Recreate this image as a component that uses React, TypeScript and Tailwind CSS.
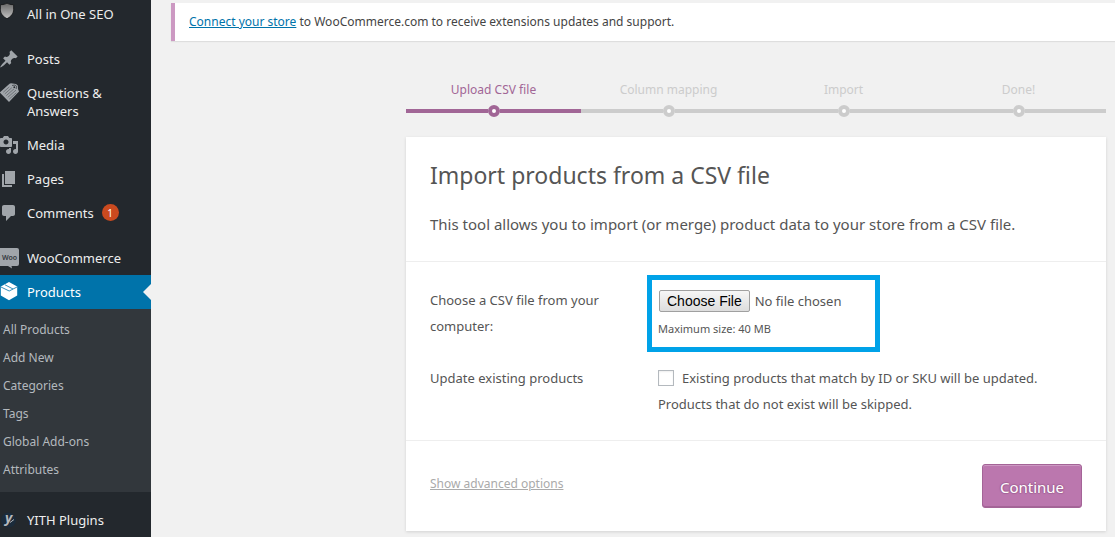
import type { ReactNode } from 'react'
import clsx from 'clsx'

const icons: Record<string, ReactNode> = {
  seo: (
    <>
      <defs>
        <linearGradient id="shield" x1="0" y1="0" x2="0" y2="1">
          <stop offset="0" stopColor="#666666" />
          <stop offset="1" stopColor="#c4c4c4" />
        </linearGradient>
      </defs>
      <path
        d="M8 -1l1.500.8c1.700.7 3.500.9 5.200.9v4.600c0 4.300-2.700 7.400-6.700 9.400C4 12.700 1.300 9.600 1.300 5.300V.7C3 .7 4.800.5 6.500-.2z"
        fill="url(#shield)"
        stroke="#1a1c1e"
      />
    </>
  ),
  posts: (
    <path d="M10.44 3.02l1.82-1.82 6.36 6.35-1.83 1.82c-1.05-.68-2.48-.57-3.41.36l-.75.75c-.92.93-1.04 2.35-.35 3.41l-1.83 1.82-2.41-2.41-2.8 2.79c-.42.42-3.38 2.71-3.8 2.29s1.86-3.39 2.28-3.81l2.79-2.79L4.1 9.36l1.83-1.82c1.05.69 2.48.57 3.4-.36l.75-.75c.93-.92 1.05-2.35.36-3.41z" />
  ),
  questions: (
    <>
      <path d="M.8 9.500L10.500.7l1.500-.5 5 .8 1.800 1.500.2 3.500 1 2.500L10 19z" />
      <path
        d="M4.300 9.200l6-5.300M5.800 10.900l7-6.200M7.300 12.600l8-7M8.800 14.300l8.200-7.200M10.300 16l7-6.200"
        stroke="#5a5f64"
        strokeWidth="0.7"
      />
      <path d="M13 2.500l3-.5 1.500 1.200-.3 2.800" fill="none" stroke="#3a3f44" strokeWidth="0.8" />
      <circle cx="15.300" cy="4.200" r="0.9" fill="#23282d" />
    </>
  ),
  media: (
    <path d="M13 11V4c0-.55-.45-1-1-1h-1.67L9 1H5L3.67 3H2c-.55 0-1 .45-1 1v7c0 .55.45 1 1 1h10c.55 0 1-.45 1-1zM7 4.500c1.380 0 2.500 1.120 2.500 2.500S8.380 9.500 7 9.500 4.500 8.380 4.500 7 5.620 4.500 7 4.500zM14 6h5v10.500c0 1.380-1.120 2.500-2.500 2.500S14 17.880 14 16.500s1.120-2.500 2.500-2.500c.17 0 .34.02.5.05V9h-3V6zm-4 8.050V13h2v3.500c0 1.380-1.120 2.500-2.500 2.500S7 17.880 7 16.500 8.120 14 9.500 14c.17 0 .34.02.5.05z" />
  ),
  pages: <path d="M6 15V2h10v13H6zm-1 1h8v2H3V5h2v11z" />,
  comments: (
    <path d="M5 2h9c1.100 0 2 .9 2 2v7c0 1.100-.9 2-2 2h-2l-5 5v-5H5c-1.100 0-2-.9-2-2V4c0-1.100.9-2 2-2z" />
  ),
  woo: (
    <>
      <path d="M1 0h17a2 2 0 0 1 2 2v14a2 2 0 0 1-2 2h-5.500l.5 2.500-4-2.500H1z" />
      <text x="3" y="11.500" fontSize="7" fontWeight="600" fill="#33383d">
        Woo
      </text>
    </>
  ),
  products: (
    <>
      <path d="M10 0l8.200 4.500v9L10 18.200l-8.200-4.700v-9z" />
      <path d="M2 5l8.200 4L18 5M6 2.800l8 4.200" fill="none" stroke="#0073aa" strokeWidth="0.8" />
    </>
  ),
  yith: (
    <>
      <circle cx="9.500" cy="10" r="7.500" fill="#1b2b3b" />
      <text x="6" y="13" fontSize="14" fontWeight="700" fontStyle="italic" fill="#b4b7ba">
        y
      </text>
      <path d="M11 12.500l4-3" stroke="#b4b7ba" />
    </>
  ),
}

function MenuIcon({ name }: { name: string }) {
  return (
    <svg
      viewBox="1 0 19 20"
      className={clsx(
        '-mt-px -mb-1 h-5 w-[19px] shrink-0 overflow-visible',
        name === 'products' ? 'fill-white' : 'fill-[#a0a5aa]',
      )}
      aria-hidden="true"
    >
      {icons[name]}
    </svg>
  )
}

type MenuItemProps = {
  icon: string
  label: string
  badge?: number
  active?: boolean
  className?: string
}

function MenuItem({ icon, label, badge, active, className = 'pt-2' }: MenuItemProps) {
  return (
    <a
      href="#"
      className={clsx(
        'relative flex items-start gap-2 pr-6 pb-2 text-[13px] leading-[18px]',
        active ? 'bg-[#0073aa] text-white' : 'text-[#eeeeee]',
        className,
      )}
    >
      <MenuIcon name={icon} />
      <span>{label}</span>
      {badge && (
        <span className="flex h-[17px] w-[17px] items-center justify-center rounded-full bg-[#ca4a1f] text-[10px] text-white">
          {badge}
        </span>
      )}
      {active && (
        <span className="absolute top-[9px] right-0 border-y-8 border-r-8 border-y-transparent border-r-[#f1f1f1]" />
      )}
    </a>
  )
}

const productLinks = ['All Products', 'Add New', 'Categories', 'Tags', 'Global Add-ons', 'Attributes']

function Sidebar() {
  return (
    <nav className="w-[151px] shrink-0 bg-[#23282d]">
      <MenuItem icon="seo" label="All in One SEO" className="pt-[5px]" />
      <div className="h-[11px]" />
      <MenuItem icon="posts" label="Posts" />
      <MenuItem icon="questions" label="Questions & Answers" />
      <MenuItem icon="media" label="Media" />
      <MenuItem icon="pages" label="Pages" />
      <MenuItem icon="comments" label="Comments" badge={1} />
      <div className="h-[11px]" />
      <MenuItem icon="woo" label="WooCommerce" />
      <MenuItem icon="products" label="Products" active />
      <ul className="bg-[#32373c] pt-[7px] pb-2">
        {productLinks.map((link) => (
          <li key={link}>
            <a href="#" className="block pl-[3px] text-[12px] leading-7 text-[#b4b9be]">
              {link}
            </a>
          </li>
        ))}
      </ul>
      <div className="h-[11px]" />
      <MenuItem icon="yith" label="YITH Plugins" />
    </nav>
  )
}

const steps = ['Upload CSV file', 'Column mapping', 'Import', 'Done!']

function Steps({ current }: { current: number }) {
  return (
    <ol className="grid grid-cols-4 text-center text-[12px] leading-[18px]">
      {steps.map((step, i) => (
        <li key={step} className={i === current ? 'text-[#a16696]' : 'text-[#cccccc]'}>
          {step}
          <div className="mt-1.5 flex h-3 items-center">
            <span className="h-1 flex-1 bg-current" />
            <span className="h-3 w-3 rounded-full border-4 border-current bg-white" />
            <span className="h-1 flex-1 bg-current" />
          </div>
        </li>
      ))}
    </ol>
  )
}

function ImportForm() {
  return (
    <form className="bg-white text-[#555555] shadow-[0_1px_3px_rgba(0,0,0,0.13)]">
      <header className="border-b border-[#eeeeee] px-6 pt-6 pb-6">
        <h1 className="text-[23px] leading-7">Import products from a CSV file</h1>
        <p className="mt-[22px] text-[15px] leading-[26px]">
          This tool allows you to import (or merge) product data to your store from a CSV file.
        </p>
      </header>

      <section className="px-6 pt-[13px] pb-[23px] text-[13px] leading-[26px]">
        <div className="flex">
          <label htmlFor="upload" className="w-[217px] shrink-0 pt-3 pr-8">
            Choose a CSV file from your computer:
          </label>
          <div className="w-[233px] border-5 border-[#00a2e8] px-1.5 pt-2.5 pb-[9px]">
            <input
              id="upload"
              type="file"
              className="block h-[22px] w-full pl-px text-[13px] leading-[22px] file:mr-[5px] file:h-[22px] file:rounded-[2px] file:border file:border-solid file:border-[#a0a0a0] file:bg-linear-to-b file:from-[#f6f6f6] file:to-[#dddddd] file:px-[7px] file:font-['Liberation_Sans',Arial,sans-serif] file:text-[14px] file:leading-5 file:text-black"
            />
            <small className="mt-2 block text-[11px] leading-[18px]">Maximum size: 40 MB</small>
          </div>
        </div>
        <div className="mt-[13px] flex">
          <span className="w-[228px] shrink-0">Update existing products</span>
          <label className="max-w-[400px] flex-1">
            <input
              type="checkbox"
              className="mr-2 h-4 w-4 appearance-none border border-[#b4b9be] bg-white align-[-3px] shadow-[inset_0_1px_2px_rgba(0,0,0,0.07)]"
            />
            Existing products that match by ID or SKU will be updated. Products that do not exist will be skipped.
          </label>
        </div>
      </section>

      <footer className="flex items-start justify-between border-t border-[#eeeeee] px-6 pt-[23px] pb-[23px]">
        <a href="#" className="mt-[11px] text-[12px] leading-[18px] text-[#aaaaaa] underline">
          Show advanced options
        </a>
        <button
          type="button"
          className="h-11 w-[100px] rounded-[3px] border border-[#a46497] bg-[#bb77ae] pt-0.5 text-[15px] text-white shadow-[inset_0_1px_0_rgba(255,255,255,0.25),inset_0_-1px_0_#a46497] [text-shadow:0_-1px_1px_#a46497,1px_0_1px_#a46497,0_1px_1px_#a46497,-1px_0_1px_#a46497]"
        >
          Continue
        </button>
      </footer>
    </form>
  )
}

export default function App() {
  return (
    <div className="flex min-h-screen bg-[#f1f1f1] font-['Noto_Sans','Segoe_UI',sans-serif]">
      <Sidebar />
      <main className="min-w-0 flex-1 pt-[3px] pl-5">
        <div className="border-l-4 border-[#cc99c2] bg-white py-2.5 pl-3.5 text-[12px] leading-[18px] text-[#444444] shadow-[0_1px_1px_rgba(0,0,0,0.08)]">
          <a href="#" className="text-[#0073aa] underline">
            Connect your store
          </a>{' '}
          to WooCommerce.com to receive extensions updates and support.
        </div>
        <div className="mt-10 mr-[9px] ml-[235px] space-y-5">
          <Steps current={0} />
          <ImportForm />
        </div>
      </main>
    </div>
  )
}
